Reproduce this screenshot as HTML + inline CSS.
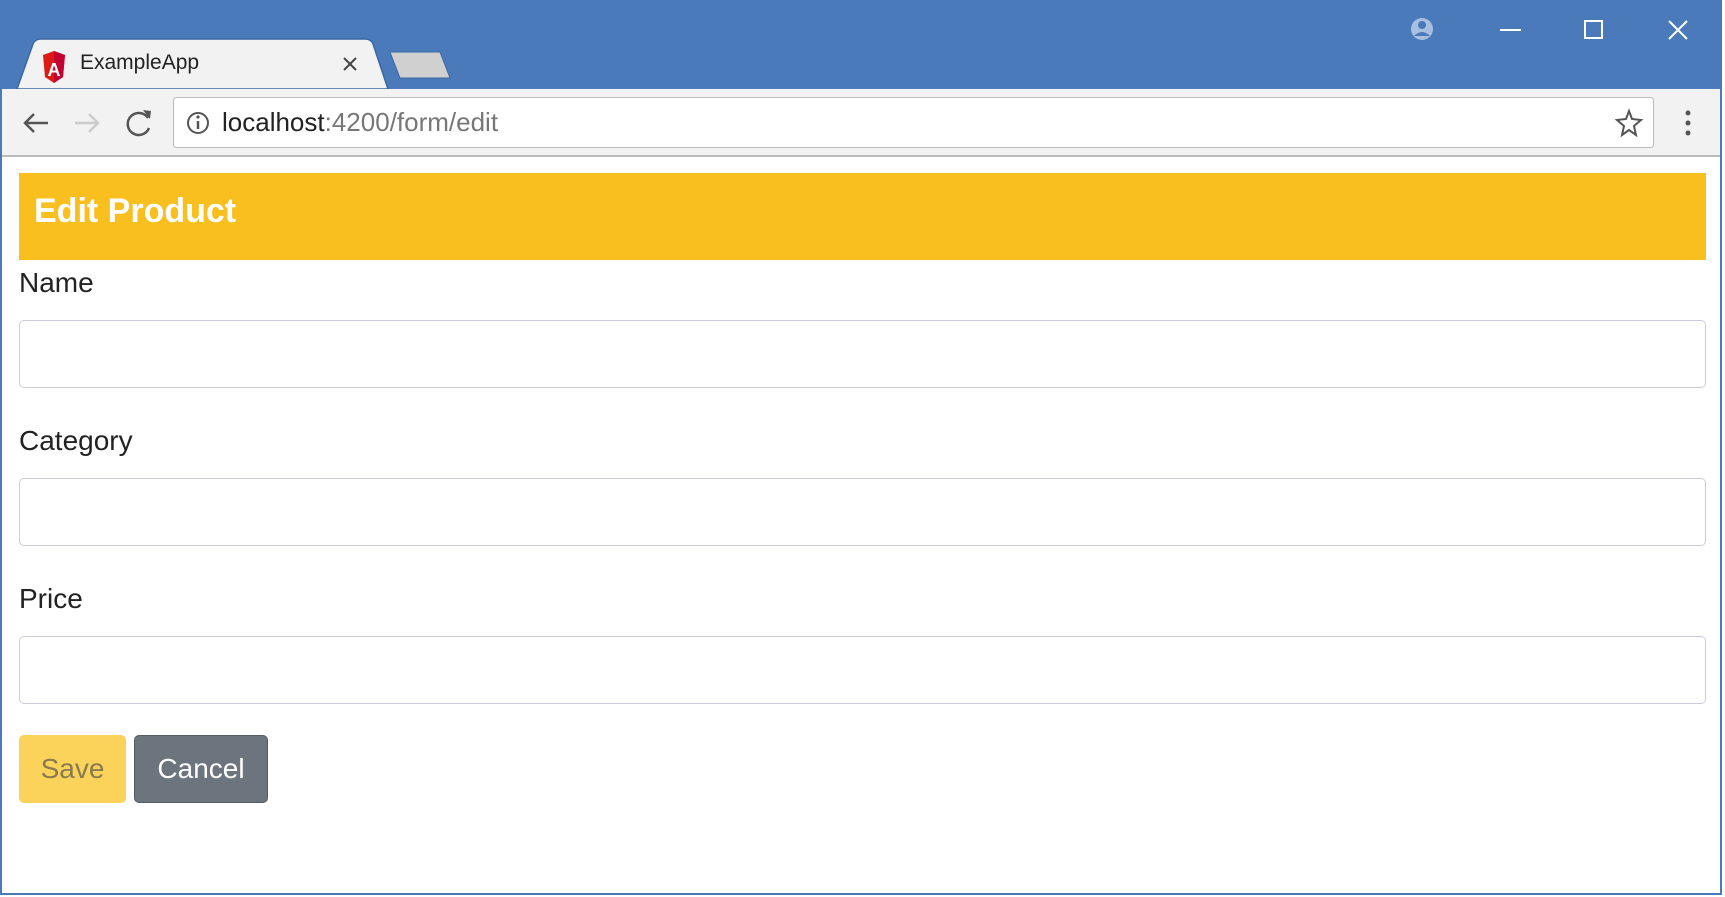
<!DOCTYPE html>
<html><head><style>
*{box-sizing:border-box;margin:0;padding:0}
body{width:1725px;height:897px;background:#fff;position:relative;overflow:hidden;font-family:"Liberation Sans",sans-serif}
.abs{position:absolute}
</style></head><body>
<div class="abs" style="left:0;top:0;width:1722px;height:895px;border:2px solid #4a7aba;border-top:none"></div>
<div class="abs" style="left:0;top:0;width:1722px;height:89px;background:#4a7aba"></div>
<svg class="abs" style="left:0;top:0" width="1725" height="160">
<path d="M17 89 L33 44 Q35 39 41 39 L365 39 Q371 39 373 44 L388 89 Z" fill="#f2f2f2" stroke="#3a68a6" stroke-width="1.5"/>
<path d="M390 52 L440 52 L450 78 L400 78 Z" fill="#d0d0d0" stroke="#3a68a6" stroke-width="1"/>
<path d="M43 55 L54 51 L65 55 L63 77 L54 83 L45 77 Z" fill="#dd1b16"/>
<path d="M54 51 L65 55 L63 77 L54 83 Z" fill="#c3002f"/>
<text x="54" y="76" font-size="18" fill="#fff" text-anchor="middle" font-family="Liberation Sans" font-weight="bold">A</text>
<path d="M344 58 L356 70 M356 58 L344 70" stroke="#444" stroke-width="2"/>
<circle cx="1422" cy="29" r="11" fill="#a8bfe0"/><circle cx="1422" cy="25" r="4" fill="#4a7aba"/><path d="M1414 36 Q1422 28 1430 36" fill="#4a7aba"/>
<path d="M1500 30 L1521 30" stroke="#fff" stroke-width="2"/>
<rect x="1585" y="21" width="17" height="17" fill="none" stroke="#fff" stroke-width="2"/>
<path d="M1669 21 L1687 39 M1687 21 L1669 39" stroke="#fff" stroke-width="2"/>
<rect x="2" y="89" width="1718" height="67" fill="#f2f2f2"/>
<line x1="2" y1="156" x2="1720" y2="156" stroke="#bbb" stroke-width="2"/>
<path d="M25 123 L48 123 M34 114 L25 123 L34 132" stroke="#555" stroke-width="2.5" fill="none"/>
<path d="M75 123 L98 123 M89 114 L98 123 L89 132" stroke="#ccc" stroke-width="2.5" fill="none"/>
<path d="M148 118 A11 11 0 1 0 149 128" stroke="#555" stroke-width="2.5" fill="none"/><path d="M143 110 L151 111 L150 119 Z" fill="#555"/>
<rect x="173.5" y="97.5" width="1480" height="50" rx="3" fill="#fff" stroke="#bbb"/>
<circle cx="198" cy="123" r="10" fill="none" stroke="#555" stroke-width="2"/><path d="M198 121 L198 129" stroke="#555" stroke-width="2.5"/><circle cx="198" cy="117" r="1.6" fill="#555"/>
<path d="M1629 111 L1632 119 L1641 120 L1634 126 L1636 135 L1629 130 L1622 135 L1624 126 L1617 120 L1626 119 Z" fill="none" stroke="#555" stroke-width="2"/>
<circle cx="1688" cy="113" r="2.5" fill="#555"/><circle cx="1688" cy="123" r="2.5" fill="#555"/><circle cx="1688" cy="133" r="2.5" fill="#555"/>
</svg>
<div class="abs" style="left:80px;top:51px;font-size:21px;color:#222">ExampleApp</div>
<div class="abs" style="left:222px;top:107px;font-size:26px;color:#222">localhost<span style="color:#777">:4200/form/edit</span></div>
<div class="abs" style="left:19px;top:173px;width:1687px;height:87px;background:#f9bf1f;color:#fff;font-weight:bold;font-size:34px;padding:19px 0 0 15px">Edit Product</div>
<div class="abs" style="left:19px;top:267px;font-size:28px;color:#222">Name</div>
<div class="abs" style="left:19px;top:320px;width:1687px;height:68px;border:1.5px solid #ccd;border-radius:5px"></div>
<div class="abs" style="left:19px;top:425px;font-size:28px;color:#222">Category</div>
<div class="abs" style="left:19px;top:478px;width:1687px;height:68px;border:1.5px solid #ccd;border-radius:5px"></div>
<div class="abs" style="left:19px;top:583px;font-size:28px;color:#222">Price</div>
<div class="abs" style="left:19px;top:636px;width:1687px;height:68px;border:1.5px solid #ccd;border-radius:5px"></div>
<div class="abs" style="left:19px;top:735px;width:107px;height:68px;background:#fbd35a;border-radius:5px;color:#8a7a50;font-size:28px;text-align:center;line-height:68px">Save</div>
<div class="abs" style="left:134px;top:735px;width:134px;height:68px;background:#6c757d;border:1px solid #555c63;border-radius:5px;color:#fff;font-size:28px;text-align:center;line-height:66px">Cancel</div>
</body></html>
